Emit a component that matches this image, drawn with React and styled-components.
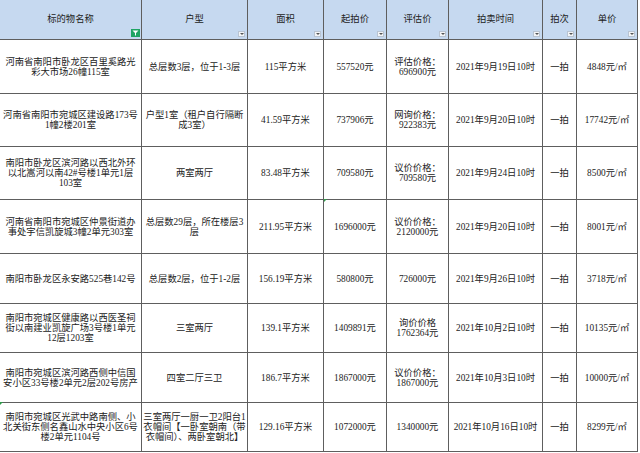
import React from 'react'
import styled, { createGlobalStyle } from 'styled-components'

const GlobalStyle = createGlobalStyle`
  html, body {
    margin: 0;
    padding: 0;
    background: #ffffff;
  }
  * {
    box-sizing: border-box;
  }
`

const widths = [142, 106, 76, 63, 62, 94, 34, 61]
const heights = [40, 54, 53, 53, 54, 50, 49, 50, 49]

const Sheet = styled.div`
  display: grid;
  grid-template-columns: ${widths.map(w => w + 'px').join(' ')};
  grid-template-rows: ${heights.map(h => h + 'px').join(' ')};
  width: 640px;
  font-family: 'Liberation Serif', 'Noto Sans CJK SC', serif;
  font-size: 9.3px;
  line-height: 10px;
  color: #222222;
`
const Cell = styled.div`
  position: relative;
  display: flex;
  flex-direction: column;
  align-items: center;
  justify-content: center;
  text-align: center;
  white-space: nowrap;
  border-right: 1px solid #5e5e5e;
  border-bottom: 1px solid #5e5e5e;
  background: ${props => (props.header ? '#c6d9f0' : '#ffffff')};
  padding-bottom: ${props => (props.header ? '1px' : '0')};
`
const Line = styled.span`
  display: block;
`
const FilterButton = styled.span`
  position: absolute;
  right: 2px;
  bottom: 2px;
  width: 7px;
  height: 6px;
  background: #f2f4f7;
  border: 1px solid #b9c4d2;
  display: flex;
  align-items: center;
  justify-content: center;
  &::after {
    content: '';
    border-left: 2px solid transparent;
    border-right: 2px solid transparent;
    border-top: 2px solid #555;
  }
`
const ActiveFilter = styled.span`
  position: absolute;
  right: 1px;
  bottom: 2px;
  width: 9px;
  height: 8px;
  background: #1fa463;
  display: flex;
  align-items: center;
  justify-content: center;
`
const ErrorMark = styled.span`
  position: absolute;
  left: 0;
  top: -1px;
  border-top: 3px solid #2f9b4a;
  border-right: 3px solid transparent;
`

const headers = ['标的物名称', '户型', '面积', '起拍价', '评估价', '拍卖时间', '拍次', '单价']

const rows = [
  {
    mark: null,
    cells: [
      ['河南省南阳市卧龙区百里奚路光', '彩大市场26幢115室'],
      ['总层数3层，位于1-3层'],
      ['115平方米'],
      ['557520元'],
      ['评估价格：', '696900元'],
      ['2021年9月19日10时'],
      ['一拍'],
      ['4848元/㎡'],
    ],
  },
  {
    mark: null,
    cells: [
      ['河南省南阳市宛城区建设路173号', '1幢2楼201室'],
      ['户型1室（租户自行隔断', '成3室）'],
      ['41.59平方米'],
      ['737906元'],
      ['网询价格：', '922383元'],
      ['2021年9月20日10时'],
      ['一拍'],
      ['17742元/㎡'],
    ],
  },
  {
    mark: null,
    cells: [
      ['南阳市卧龙区滨河路以西北外环', '以北嵩河以南42#号楼1单元1层', '103室'],
      ['两室两厅'],
      ['83.48平方米'],
      ['709580元'],
      ['议价价格：', '709580元'],
      ['2021年9月24日10时'],
      ['一拍'],
      ['8500元/㎡'],
    ],
  },
  {
    mark: 3,
    cells: [
      ['河南省南阳市宛城区仲景街道办', '事处宇信凯旋城3幢2单元303室'],
      ['总层数29层，所在楼层3', '层'],
      ['211.95平方米'],
      ['1696000元'],
      ['议价价格：', '2120000元'],
      ['2021年9月20日10时'],
      ['一拍'],
      ['8001元/㎡'],
    ],
  },
  {
    mark: null,
    cells: [
      ['南阳市卧龙区永安路525巷142号'],
      ['总层数2层，位于1-2层'],
      ['156.19平方米'],
      ['580800元'],
      ['726000元'],
      ['2021年9月26日10时'],
      ['一拍'],
      ['3718元/㎡'],
    ],
  },
  {
    mark: null,
    cells: [
      ['南阳市宛城区健康路以西医圣祠', '街以南建业凯旋广场3号楼1单元', '12层1203室'],
      ['三室两厅'],
      ['139.1平方米'],
      ['1409891元'],
      ['询价价格', '1762364元'],
      ['2021年10月2日10时'],
      ['一拍'],
      ['10135元/㎡'],
    ],
  },
  {
    mark: null,
    cells: [
      ['南阳市宛城区滨河路西侧中信国', '安小区33号楼2单元2层202号房产'],
      ['四室二厅三卫'],
      ['186.7平方米'],
      ['1867000元'],
      ['议价价格：', '1867000元'],
      ['2021年10月3日10时'],
      ['一拍'],
      ['10000元/㎡'],
    ],
  },
  {
    mark: 0,
    cells: [
      ['南阳市宛城区光武中路南侧、小', '北关街东侧名鑫山水中央小区6号', '楼2单元1104号'],
      ['三室两厅一厨一卫2阳台1', '衣帽间【一卧室朝南（带', '衣帽间）、两卧室朝北】'],
      ['129.16平方米'],
      ['1072000元'],
      ['1340000元'],
      ['2021年10月16日10时'],
      ['一拍'],
      ['8299元/㎡'],
    ],
  },
]

const FunnelIcon = () => (
  <svg width="7" height="6" viewBox="0 0 7 6">
    <path d="M0.5 0.5 H6.5 L4 3 V5.5 H3 V3 Z" fill="#ffffff" />
  </svg>
)

export default function App() {
  return (
    <>
      <GlobalStyle />
      <Sheet>
        {headers.map((h, i) => (
          <Cell header key={h}>
            {h}
            {i === 0 ? (
              <ActiveFilter>
                <FunnelIcon />
              </ActiveFilter>
            ) : (
              <FilterButton />
            )}
          </Cell>
        ))}
        {rows.map((row, r) =>
          row.cells.map((lines, c) => (
            <Cell key={r + '-' + c}>
              {row.mark === c && <ErrorMark />}
              {lines.map(l => (
                <Line key={l}>{l}</Line>
              ))}
            </Cell>
          ))
        )}
      </Sheet>
    </>
  )
}
